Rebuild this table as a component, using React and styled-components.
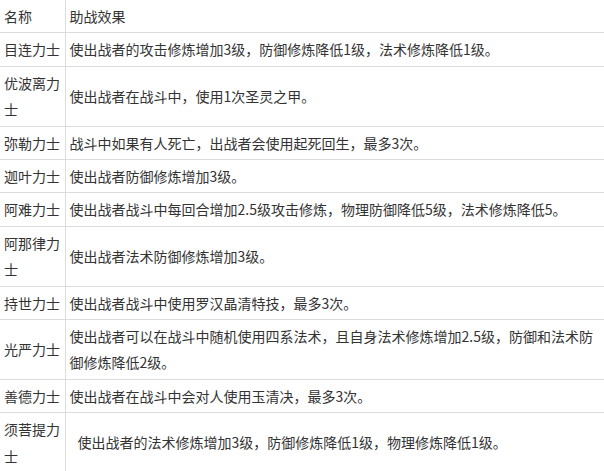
import React from 'react';
import styled, { createGlobalStyle } from 'styled-components';

const GlobalStyle = createGlobalStyle`
  html, body {
    margin: 0;
    padding: 0;
    background: #fff;
  }
  body {
    font-family: "Microsoft YaHei", "Noto Sans CJK SC", sans-serif;
    color: #333;
  }
`;

const Table = styled.table`
  width: 604px;
  border-collapse: collapse;
  table-layout: fixed;
  font-size: 14px;
  line-height: 26.4px;
`;

const Cell = styled.td`
  padding: 3px 4px 3px ${(p) => (p.$indent ? '12px' : '4px')};
  border-bottom: 1px solid #ddd;
  vertical-align: middle;
  text-align: left;
  word-break: break-all;
  &:first-child {
    padding-right: 2px;
    border-right: 1px solid #ddd;
  }
`;

const HeadCell = styled(Cell).attrs({ as: 'th' })`
  font-weight: normal;
`;

const rows = [
  ['目连力士', '使出战者的攻击修炼增加3级，防御修炼降低1级，法术修炼降低1级。'],
  ['优波离力士', '使出战者在战斗中，使用1次圣灵之甲。'],
  ['弥勒力士', '战斗中如果有人死亡，出战者会使用起死回生，最多3次。'],
  ['迦叶力士', '使出战者防御修炼增加3级。'],
  ['阿难力士', '使出战者战斗中每回合增加2.5级攻击修炼，物理防御降低5级，法术修炼降低5。'],
  ['阿那律力士', '使出战者法术防御修炼增加3级。'],
  ['持世力士', '使出战者战斗中使用罗汉晶清特技，最多3次。'],
  ['光严力士', '使出战者可以在战斗中随机使用四系法术，且自身法术修炼增加2.5级，防御和法术防御修炼降低2级。'],
  ['善德力士', '使出战者在战斗中会对人使用玉清决，最多3次。'],
  ['须菩提力士', '使出战者的法术修炼增加3级，防御修炼降低1级，物理修炼降低1级。', true],
];

export default function App() {
  return (
    <>
      <GlobalStyle />
      <Table>
        <colgroup>
          <col style={{ width: '65px' }} />
          <col />
        </colgroup>
        <thead>
          <tr>
            <HeadCell>名称</HeadCell>
            <HeadCell>助战效果</HeadCell>
          </tr>
        </thead>
        <tbody>
          {rows.map(([name, effect, indent]) => (
            <tr key={name}>
              <Cell>{name}</Cell>
              <Cell $indent={indent}>{effect}</Cell>
            </tr>
          ))}
        </tbody>
      </Table>
    </>
  );
}
